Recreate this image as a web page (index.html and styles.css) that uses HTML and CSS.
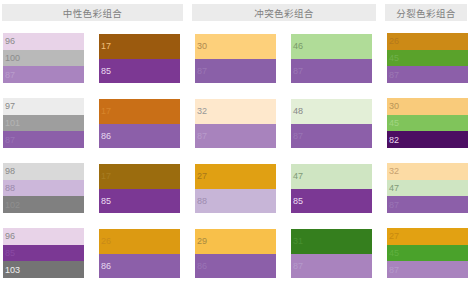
FILE: index.html
```html
<!DOCTYPE html>
<html>
<head>
<meta charset="utf-8">
<link rel="stylesheet" href="styles.css">
</head>
<body>
<div class="page">
  <div class="heads">
    <div class="head h1">中性色彩组合</div>
    <div class="head h2">冲突色彩组合</div>
    <div class="head h3">分裂色彩组合</div>
  </div>
  <div class="grid">
    <!-- group 1 -->
    <div class="box">
      <div class="cell" style="background:#e8d3e8;color:#8a8a8a">96</div>
      <div class="cell" style="background:#b9b9b9;color:#8c8c8c">100</div>
      <div class="cell" style="background:#a984bf;color:#b99dcc">87</div>
    </div>
    <div class="box two">
      <div class="cell" style="background:#9b5a0e;color:#f1bf78">17</div>
      <div class="cell" style="background:#7c3893;color:#eadbf0">85</div>
    </div>
    <div class="box two">
      <div class="cell" style="background:#fdd07b;color:#b08a50">30</div>
      <div class="cell" style="background:#8a60a8;color:#9a76b4">87</div>
    </div>
    <div class="box two">
      <div class="cell" style="background:#b0dc98;color:#7a9a6a">46</div>
      <div class="cell" style="background:#8a5ea8;color:#9a76b4">87</div>
    </div>
    <div class="box">
      <div class="cell" style="background:#cc8a16;color:#b5791c">26</div>
      <div class="cell" style="background:#5aa22b;color:#6fb04a">45</div>
      <div class="cell" style="background:#8c5fa9;color:#9c78b4">87</div>
    </div>
    <!-- group 2 -->
    <div class="box">
      <div class="cell" style="background:#ececec;color:#8a8a8a">97</div>
      <div class="cell" style="background:#9e9e9e;color:#b4b4b4">101</div>
      <div class="cell" style="background:#8c5fa9;color:#9a74b5">87</div>
    </div>
    <div class="box two">
      <div class="cell" style="background:#c96f17;color:#d7852b">17</div>
      <div class="cell" style="background:#8c5fa9;color:#e6d8ef">86</div>
    </div>
    <div class="box two">
      <div class="cell" style="background:#fee8cc;color:#999999">32</div>
      <div class="cell" style="background:#a883bd;color:#b89bcb">87</div>
    </div>
    <div class="box two">
      <div class="cell" style="background:#e3efd7;color:#888888">48</div>
      <div class="cell" style="background:#8c5fa9;color:#9a74b5">87</div>
    </div>
    <div class="box">
      <div class="cell" style="background:#f9cb7b;color:#b99657">30</div>
      <div class="cell" style="background:#80c45b;color:#a0d482">45</div>
      <div class="cell" style="background:#4c0e62;color:#e8d8ee">82</div>
    </div>
    <!-- group 3 -->
    <div class="box">
      <div class="cell" style="background:#d9d9d9;color:#8a8a8a">98</div>
      <div class="cell" style="background:#ccb7da;color:#9b8aab">88</div>
      <div class="cell" style="background:#808080;color:#8f8f8f">102</div>
    </div>
    <div class="box two">
      <div class="cell" style="background:#9b6c0e;color:#a77c22">17</div>
      <div class="cell" style="background:#7b3894;color:#ecdff2">85</div>
    </div>
    <div class="box two">
      <div class="cell" style="background:#e0a013;color:#a8781a">27</div>
      <div class="cell" style="background:#c7b5d7;color:#9e8cb0">88</div>
    </div>
    <div class="box two">
      <div class="cell" style="background:#cfe5c2;color:#809a78">47</div>
      <div class="cell" style="background:#7b3894;color:#ecdff2">85</div>
    </div>
    <div class="box">
      <div class="cell" style="background:#fcdba4;color:#c8a270">32</div>
      <div class="cell" style="background:#cfe5c2;color:#809a78">47</div>
      <div class="cell" style="background:#8c5fa9;color:#9a74b5">87</div>
    </div>
    <!-- group 4 -->
    <div class="box">
      <div class="cell" style="background:#e8d3e8;color:#8a8a8a">96</div>
      <div class="cell" style="background:#7b3894;color:#8a4aa4">85</div>
      <div class="cell" style="background:#747474;color:#f0f0f0">103</div>
    </div>
    <div class="box two">
      <div class="cell" style="background:#dc9a12;color:#c98a18">26</div>
      <div class="cell" style="background:#8c5fa9;color:#e6d8ef">86</div>
    </div>
    <div class="box two">
      <div class="cell" style="background:#f8c04a;color:#a88a40">29</div>
      <div class="cell" style="background:#8c5fa9;color:#9a74b5">86</div>
    </div>
    <div class="box two">
      <div class="cell" style="background:#357f1e;color:#488f30">31</div>
      <div class="cell" style="background:#a983be;color:#b59acb">87</div>
    </div>
    <div class="box">
      <div class="cell" style="background:#e2a112;color:#c88a10">27</div>
      <div class="cell" style="background:#4aa22b;color:#60b040">45</div>
      <div class="cell" style="background:#a983be;color:#b59acb">87</div>
    </div>
  </div>
</div>
</body>
</html>
```

FILE: styles.css
```css
html, body {
  margin: 0;
  padding: 0;
  background: #ffffff;
}

.page {
  padding: 4px 0 0 2px;
  width: 474px;
  box-sizing: border-box;
}

.heads {
  display: grid;
  grid-template-columns: 181px 184px 82px;
  column-gap: 9px;
  height: 17px;
}

.head {
  background: #ebebeb;
  color: #808080;
  font-family: "Noto Sans CJK SC", "Noto Sans", sans-serif;
  font-size: 9.5px;
  letter-spacing: 0.4px;
  display: flex;
  align-items: center;
  justify-content: center;
}

.grid {
  display: grid;
  grid-template-columns: repeat(5, 81px);
  grid-auto-rows: 50px;
  column-gap: 15px;
  row-gap: 15px;
  margin: 12px 0 0 1px;
}

.box {
  display: flex;
  flex-direction: column;
}

.box.two {
  margin-top: 1px;
}

.cell {
  flex: 1;
  display: flex;
  align-items: center;
  padding-left: 2px;
  font-family: "Liberation Sans", Arial, sans-serif;
  font-size: 9px;
}
```
